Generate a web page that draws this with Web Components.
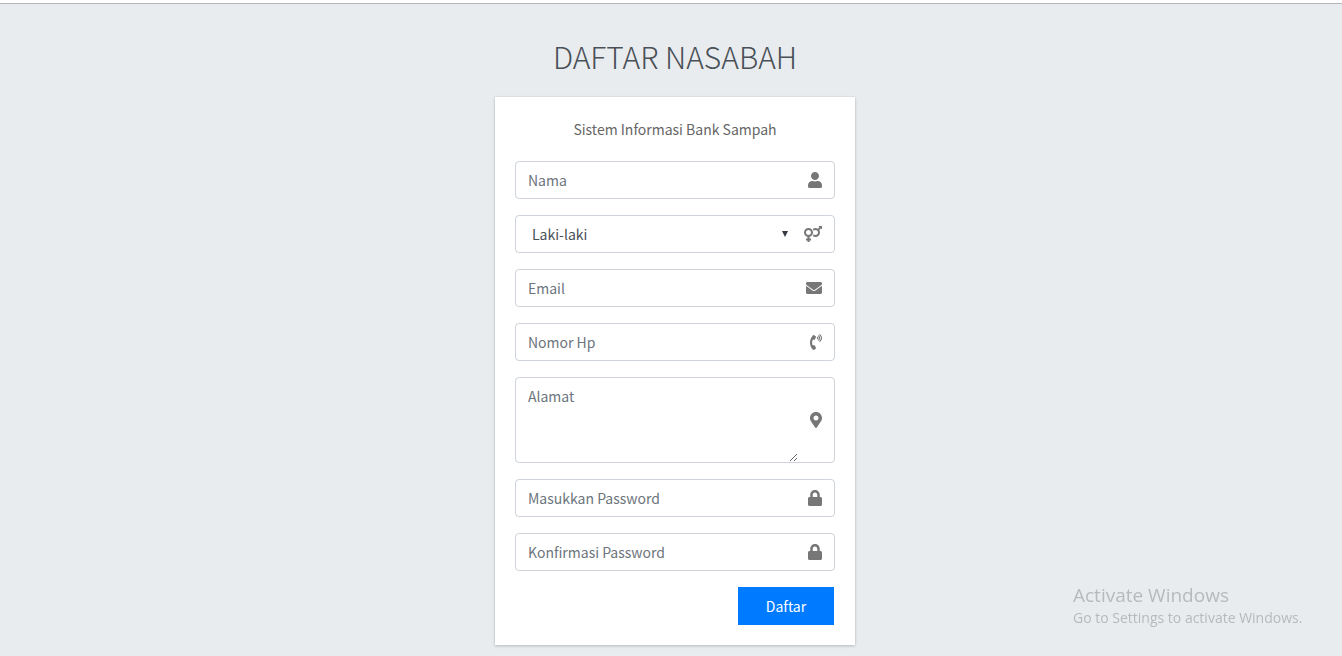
<!DOCTYPE html>
<html lang="id">
<head>
<meta charset="utf-8">
<meta name="viewport" content="width=device-width, initial-scale=1">
<title>Daftar Nasabah</title>
<style>
body {
  margin: 0;
  background: #e9ecef;
  color: #495057;
  font: 14px/24px "Noto Sans CJK SC", "Open Sans", sans-serif;
}
</style>
</head>
<body>
<register-page>
  <span slot="title">DAFTAR NASABAH</span>
  <form-card>
    <span slot="intro">Sistem Informasi Bank Sampah</span>
    <form-field label="Nama" icon="user"></form-field>
    <form-field kind="select" label="Jenis kelamin" options="Laki-laki,Perempuan" icon="gender"></form-field>
    <form-field kind="email" label="Email" icon="envelope"></form-field>
    <form-field kind="tel" label="Nomor Hp" icon="phone"></form-field>
    <form-field kind="textarea" label="Alamat" icon="marker"></form-field>
    <form-field kind="password" label="Masukkan Password" icon="lock"></form-field>
    <form-field kind="password" label="Konfirmasi Password" icon="lock"></form-field>
    <submit-button slot="actions">Daftar</submit-button>
  </form-card>
</register-page>
<system-notice>
  <span slot="title">Activate Windows</span>
  <span slot="detail">Go to Settings to activate Windows.</span>
</system-notice>

<script>
const ICONS = {
  user: [448, '<path d="M224 256c70.7 0 128-57.3 128-128S294.7 0 224 0 96 57.3 96 128s57.3 128 128 128zm89.6 32h-16.7c-22.2 10.2-46.9 16-72.9 16s-50.6-5.8-72.9-16h-16.7C60.2 288 0 348.2 0 422.4V464c0 26.5 21.5 48 48 48h352c26.5 0 48-21.5 48-48v-41.6c0-74.2-60.2-134.4-134.4-134.4z"/>'],
  gender: [576, '<path d="M564 0h-79c-10.7 0-16 12.9-8.5 20.4l16.9 16.9-48.7 48.7C422.5 72.1 396.2 64 368 64c-33.7 0-64.6 11.6-89.2 30.9 14 16.7 25 36 32.1 57.1 14.5-14.8 34.7-24 57.1-24 44.1 0 80 35.9 80 80s-35.9 80-80 80c-22.3 0-42.6-9.2-57.1-24-7.1 21.1-18 40.4-32.1 57.1 24.5 19.4 55.5 30.9 89.2 30.9 79.5 0 144-64.5 144-144 0-28.2-8.1-54.5-22.1-76.7l48.7-48.7 16.9 16.9c2.4 2.4 5.4 3.5 8.4 3.5 6.2 0 12.1-4.8 12.1-12V12c0-6.6-5.4-12-12-12zM144 64C64.5 64 0 128.5 0 208c0 68.5 47.9 125.9 112 140.4V400H76c-6.6 0-12 5.4-12 12v40c0 6.6 5.4 12 12 12h36v36c0 6.6 5.4 12 12 12h40c6.6 0 12-5.4 12-12v-36h36c6.6 0 12-5.4 12-12v-40c0-6.6-5.4-12-12-12h-36v-51.6c64.1-14.6 112-71.9 112-140.4 0-79.5-64.5-144-144-144zm0 224c-44.1 0-80-35.9-80-80s35.9-80 80-80 80 35.9 80 80-35.9 80-80 80z"/>'],
  envelope: [512, '<path d="M502.3 190.8c3.9-3.1 9.7-.2 9.7 4.7V400c0 26.5-21.5 48-48 48H48c-26.5 0-48-21.5-48-48V195.6c0-5 5.7-7.8 9.7-4.7 22.4 17.4 52.1 39.5 154.1 113.6 21.1 15.4 56.7 47.8 92.2 47.6 35.7.3 72-32.8 92.3-47.6 102-74.1 131.6-96.3 154-113.7zM256 320c23.2.4 56.6-29.2 73.4-41.4 132.7-96.3 142.8-104.7 173.4-128.7 5.8-4.5 9.2-11.5 9.2-18.9v-19c0-26.5-21.5-48-48-48H48c-26.5 0-48 21.5-48 48v19c0 7.4 3.4 14.3 9.2 18.9 30.6 23.9 40.7 32.4 173.4 128.7 16.8 12.2 50.2 41.8 73.4 41.4z"/>'],
  phone: [384, '<path d="M97.333 506.966c-129.874-129.874-129.681-340.252 0-469.933 5.698-5.698 14.527-6.632 21.263-2.422l64.817 40.513a17.187 17.187 0 0 1 6.849 20.958l-32.408 81.021a17.188 17.188 0 0 1-17.669 10.719l-55.81-5.58c-21.051 58.261-20.612 122.471 0 179.515l55.811-5.581a17.188 17.188 0 0 1 17.669 10.719l32.408 81.022a17.188 17.188 0 0 1-6.849 20.958l-64.817 40.513a17.19 17.19 0 0 1-21.264-2.422z"/><path fill="none" stroke="currentColor" stroke-width="34" stroke-linecap="round" d="M237 102q21 26 0 52M276 60q62 68 0 136M315 18q104 110 0 220"/>'],
  marker: [384, '<path d="M172.268 501.67C26.97 291.031 0 269.413 0 192 0 85.961 85.961 0 192 0s192 85.961 192 192c0 77.413-26.97 99.031-172.268 309.67-9.535 13.774-29.93 13.773-39.464 0zM192 272c44.183 0 80-35.817 80-80s-35.817-80-80-80-80 35.817-80 80 35.817 80 80 80z"/>'],
  lock: [448, '<path d="M400 224h-24v-72C376 68.2 307.8 0 224 0S72 68.2 72 152v72H48c-26.5 0-48 21.5-48 48v192c0 26.5 21.5 48 48 48h352c26.5 0 48-21.5 48-48V272c0-26.5-21.5-48-48-48zm-104 0H152v-72c0-39.7 32.3-72 72-72s72 32.3 72 72v72z"/>']
};

class RegisterPage extends HTMLElement {
  constructor() {
    super();
    this.attachShadow({ mode: 'open' }).innerHTML = `
      <style>
        :host { display: block; border-top: 3px solid #fff; }
        main {
          border-top: 1px solid #b4b5bb;
          padding: 30px 0 11px 8px;
          display: flex; flex-direction: column; align-items: center; gap: 18px;
        }
        h1 { margin: 0; font-size: 30px; line-height: 45px; font-weight: 300; }
      </style>
      <main><h1><slot name="title"></slot></h1><slot></slot></main>`;
  }
}
customElements.define('register-page', RegisterPage);

class FormCard extends HTMLElement {
  constructor() {
    super();
    this.attachShadow({ mode: 'open' }).innerHTML = `
      <style>
        :host { display: block; width: 360px; max-width: 100%; }
        form {
          background: #fff; padding: 20px; color: #666;
          box-shadow: 0 0 1px rgba(0,0,0,.125), 0 1px 3px rgba(0,0,0,.2);
          display: flex; flex-direction: column; gap: 16px;
        }
        p { margin: 0; padding-bottom: 4px; text-align: center; }
        footer { display: flex; justify-content: flex-end; padding-right: 1px; }
      </style>
      <form>
        <p><slot name="intro"></slot></p>
        <slot></slot>
        <footer><slot name="actions"></slot></footer>
      </form>`;
  }
}
customElements.define('form-card', FormCard);

class FieldIcon extends HTMLElement {
  connectedCallback() {
    const [width, shape] = ICONS[this.getAttribute('name')];
    const root = this.shadowRoot || this.attachShadow({ mode: 'open' });
    root.innerHTML = `
      <style>
        :host { display: flex; align-items: center; padding: 0 12px; color: #777; }
        svg { display: block; height: 16px; fill: currentColor; overflow: visible; }
      </style>
      <svg width="${width / 32}" viewBox="0 0 ${width} 512" aria-hidden="true">${shape}</svg>`;
  }
}
customElements.define('field-icon', FieldIcon);

class FormField extends HTMLElement {
  connectedCallback() {
    const kind = this.getAttribute('kind') || 'text';
    const label = this.getAttribute('label');
    let control;
    if (kind === 'select') {
      const options = this.getAttribute('options').split(',').map(o => `<option>${o}</option>`).join('');
      control = `<select aria-label="${label}">${options}</select>
        <svg class="arrow" width="6" height="6" viewBox="0 0 6 6" aria-hidden="true"><path d="M0 0h6L3 6z"/></svg>`;
    } else if (kind === 'textarea') {
      control = `<textarea rows="3" aria-label="${label}" placeholder="${label}"></textarea>`;
    } else {
      control = `<input type="${kind}" aria-label="${label}" placeholder="${label}">`;
    }
    const root = this.shadowRoot || this.attachShadow({ mode: 'open' });
    root.innerHTML = `
      <style>
        :host { display: block; }
        .group {
          display: flex; border: 1px solid #ced4da; border-radius: 4px; background: #fff;
        }
        .group:focus-within { border-color: #80bdff; }
        input, select, textarea {
          flex: 1; min-width: 0; box-sizing: border-box; height: 36px; margin: 0;
          padding: 6px 12px; border: 0; outline: 0; background: transparent;
          font: inherit; color: #495057;
        }
        textarea { height: 84px; resize: vertical; display: block; }
        select { appearance: none; padding: 6px 16px; }
        ::placeholder { color: #6c757d; opacity: 1; }
        .arrow { align-self: center; fill: #343a40; flex: none; }
        .arrow + field-icon { margin-left: 4px; }
      </style>
      <div class="group">${control}<field-icon name="${this.getAttribute('icon')}"></field-icon></div>`;
  }
}
customElements.define('form-field', FormField);

class SubmitButton extends HTMLElement {
  constructor() {
    super();
    this.attachShadow({ mode: 'open' }).innerHTML = `
      <style>
        :host { display: block; width: 96px; }
        button {
          display: block; width: 100%; height: 38px; margin: 0; padding: 6px 12px;
          border: 1px solid #007bff; background: #007bff; color: #fff;
          font: inherit; cursor: pointer;
        }
      </style>
      <button type="button"><slot></slot></button>`;
  }
}
customElements.define('submit-button', SubmitButton);

class SystemNotice extends HTMLElement {
  constructor() {
    super();
    this.attachShadow({ mode: 'open' }).innerHTML = `
      <style>
        :host {
          display: block; position: fixed; right: 32px; bottom: 28px; min-width: 237px;
          pointer-events: none;
          color: #b7babc; font-family: "Open Sans", "Noto Sans", sans-serif;
        }
        .title { font-size: 19px; line-height: 26px; }
        .detail { font-size: 14px; line-height: 20px; }
      </style>
      <div class="title"><slot name="title"></slot></div>
      <div class="detail"><slot name="detail"></slot></div>`;
  }
}
customElements.define('system-notice', SystemNotice);
</script>
</body>
</html>
